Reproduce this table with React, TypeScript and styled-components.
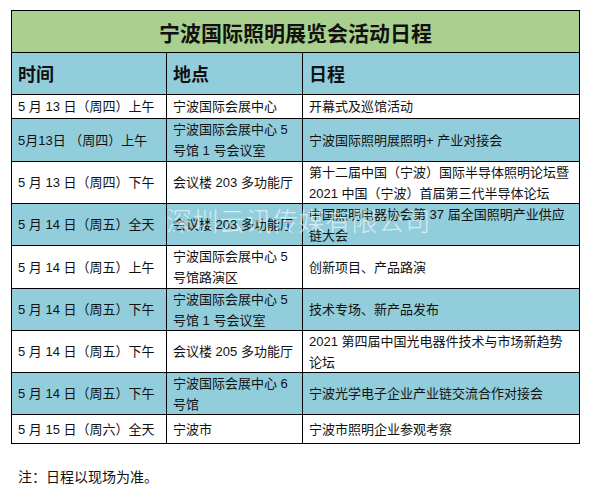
import styled, { createGlobalStyle } from 'styled-components'

const GlobalStyle = createGlobalStyle`
  * {
    box-sizing: border-box;
  }
  body {
    margin: 0;
    background: #fff;
    font-family: 'Liberation Sans', 'Noto Sans CJK SC', sans-serif;
    color: #111;
  }
`

type Item = {
  time: string
  place: string[]
  event: string[]
  h: number
}

const items: Item[] = [
  { time: '5 月 13 日（周四）上午', place: ['宁波国际会展中心'], event: ['开幕式及巡馆活动'], h: 24 },
  { time: '5月13日 （周四）上午', place: ['宁波国际会展中心 5', '号馆 1 号会议室'], event: ['宁波国际照明展照明+ 产业对接会'], h: 43 },
  {
    time: '5 月 13 日（周四）下午',
    place: ['会议楼 203 多功能厅'],
    event: ['第十二届中国（宁波）国际半导体照明论坛暨', '2021 中国（宁波）首届第三代半导体论坛'],
    h: 42,
  },
  {
    time: '5 月 14 日（周五）全天',
    place: ['会议楼 203 多功能厅'],
    event: ['中国照明电器协会第 37 届全国照明产业供应', '链大会'],
    h: 42,
  },
  { time: '5 月 14 日（周五）上午', place: ['宁波国际会展中心 5', '号馆路演区'], event: ['创新项目、产品路演'], h: 43 },
  { time: '5 月 14 日（周五）下午', place: ['宁波国际会展中心 5', '号馆 1 号会议室'], event: ['技术专场、新产品发布'], h: 42 },
  {
    time: '5 月 14 日（周五）下午',
    place: ['会议楼 205 多功能厅'],
    event: ['2021 第四届中国光电器件技术与市场新趋势', '论坛'],
    h: 42,
  },
  { time: '5 月 14 日（周五）下午', place: ['宁波国际会展中心 6', '号馆'], event: ['宁波光学电子企业产业链交流合作对接会'], h: 42 },
  { time: '5 月 15 日（周六）全天', place: ['宁波市'], event: ['宁波市照明企业参观考察'], h: 29 },
]

const Page = styled.div`
  padding: 10px 0 0 11px;
`

const Table = styled.div`
  position: relative;
  width: 569px;
  border: 1px solid #000;
`

const TitleRow = styled.div`
  height: 41px;
  background: #a9d08e;
  display: flex;
  align-items: center;
  justify-content: center;
  font-family: 'Noto Sans CJK SC', sans-serif;
  font-weight: 700;
  font-size: 21px;
  color: #111;
`

const Row = styled.div<{ $h: number; $tint: boolean }>`
  display: grid;
  grid-template-columns: 154px 136px 1fr;
  height: ${({ $h }) => $h}px;
  border-top: 1px solid #000;
  background: ${({ $tint }) => ($tint ? '#92cddc' : '#fff')};
`

const Cell = styled.div`
  display: flex;
  flex-direction: column;
  justify-content: center;
  padding: 0 6px;
  font-size: 13px;
  line-height: 21px;
  white-space: nowrap;
  overflow: hidden;
  & + & {
    border-left: 1px solid #000;
  }
`

const HeadCell = styled(Cell)`
  font-family: 'Noto Sans CJK SC', sans-serif;
  font-weight: 700;
  font-size: 18px;
  padding-left: 6px;
`

const Watermark = styled.div`
  position: absolute;
  left: 154px;
  top: 196px;
  font-family: 'Noto Sans CJK SC', sans-serif;
  font-weight: 300;
  font-size: 26px;
  line-height: 26px;
  letter-spacing: 0.5px;
  color: rgba(255, 255, 255, 0.6);
  pointer-events: none;
  white-space: nowrap;
`

const Note = styled.div`
  margin-top: 22px;
  padding-left: 7px;
  font-family: 'Noto Sans CJK SC', sans-serif;
  font-size: 14px;
  line-height: 20px;
`

export default function App() {
  return (
    <>
      <GlobalStyle />
      <Page>
        <Table>
          <TitleRow>宁波国际照明展览会活动日程</TitleRow>
          <Row $h={42} $tint>
            <HeadCell>时间</HeadCell>
            <HeadCell>地点</HeadCell>
            <HeadCell>日程</HeadCell>
          </Row>
          {items.map((it, i) => (
            <Row key={i} $h={it.h} $tint={i % 2 === 1}>
              <Cell>{it.time}</Cell>
              <Cell>
                {it.place.map((l, j) => (
                  <span key={j}>{l}</span>
                ))}
              </Cell>
              <Cell>
                {it.event.map((l, j) => (
                  <span key={j}>{l}</span>
                ))}
              </Cell>
            </Row>
          ))}
          <Watermark>深圳云讯传媒有限公司</Watermark>
        </Table>
        <Note>注：日程以现场为准。</Note>
      </Page>
    </>
  )
}
